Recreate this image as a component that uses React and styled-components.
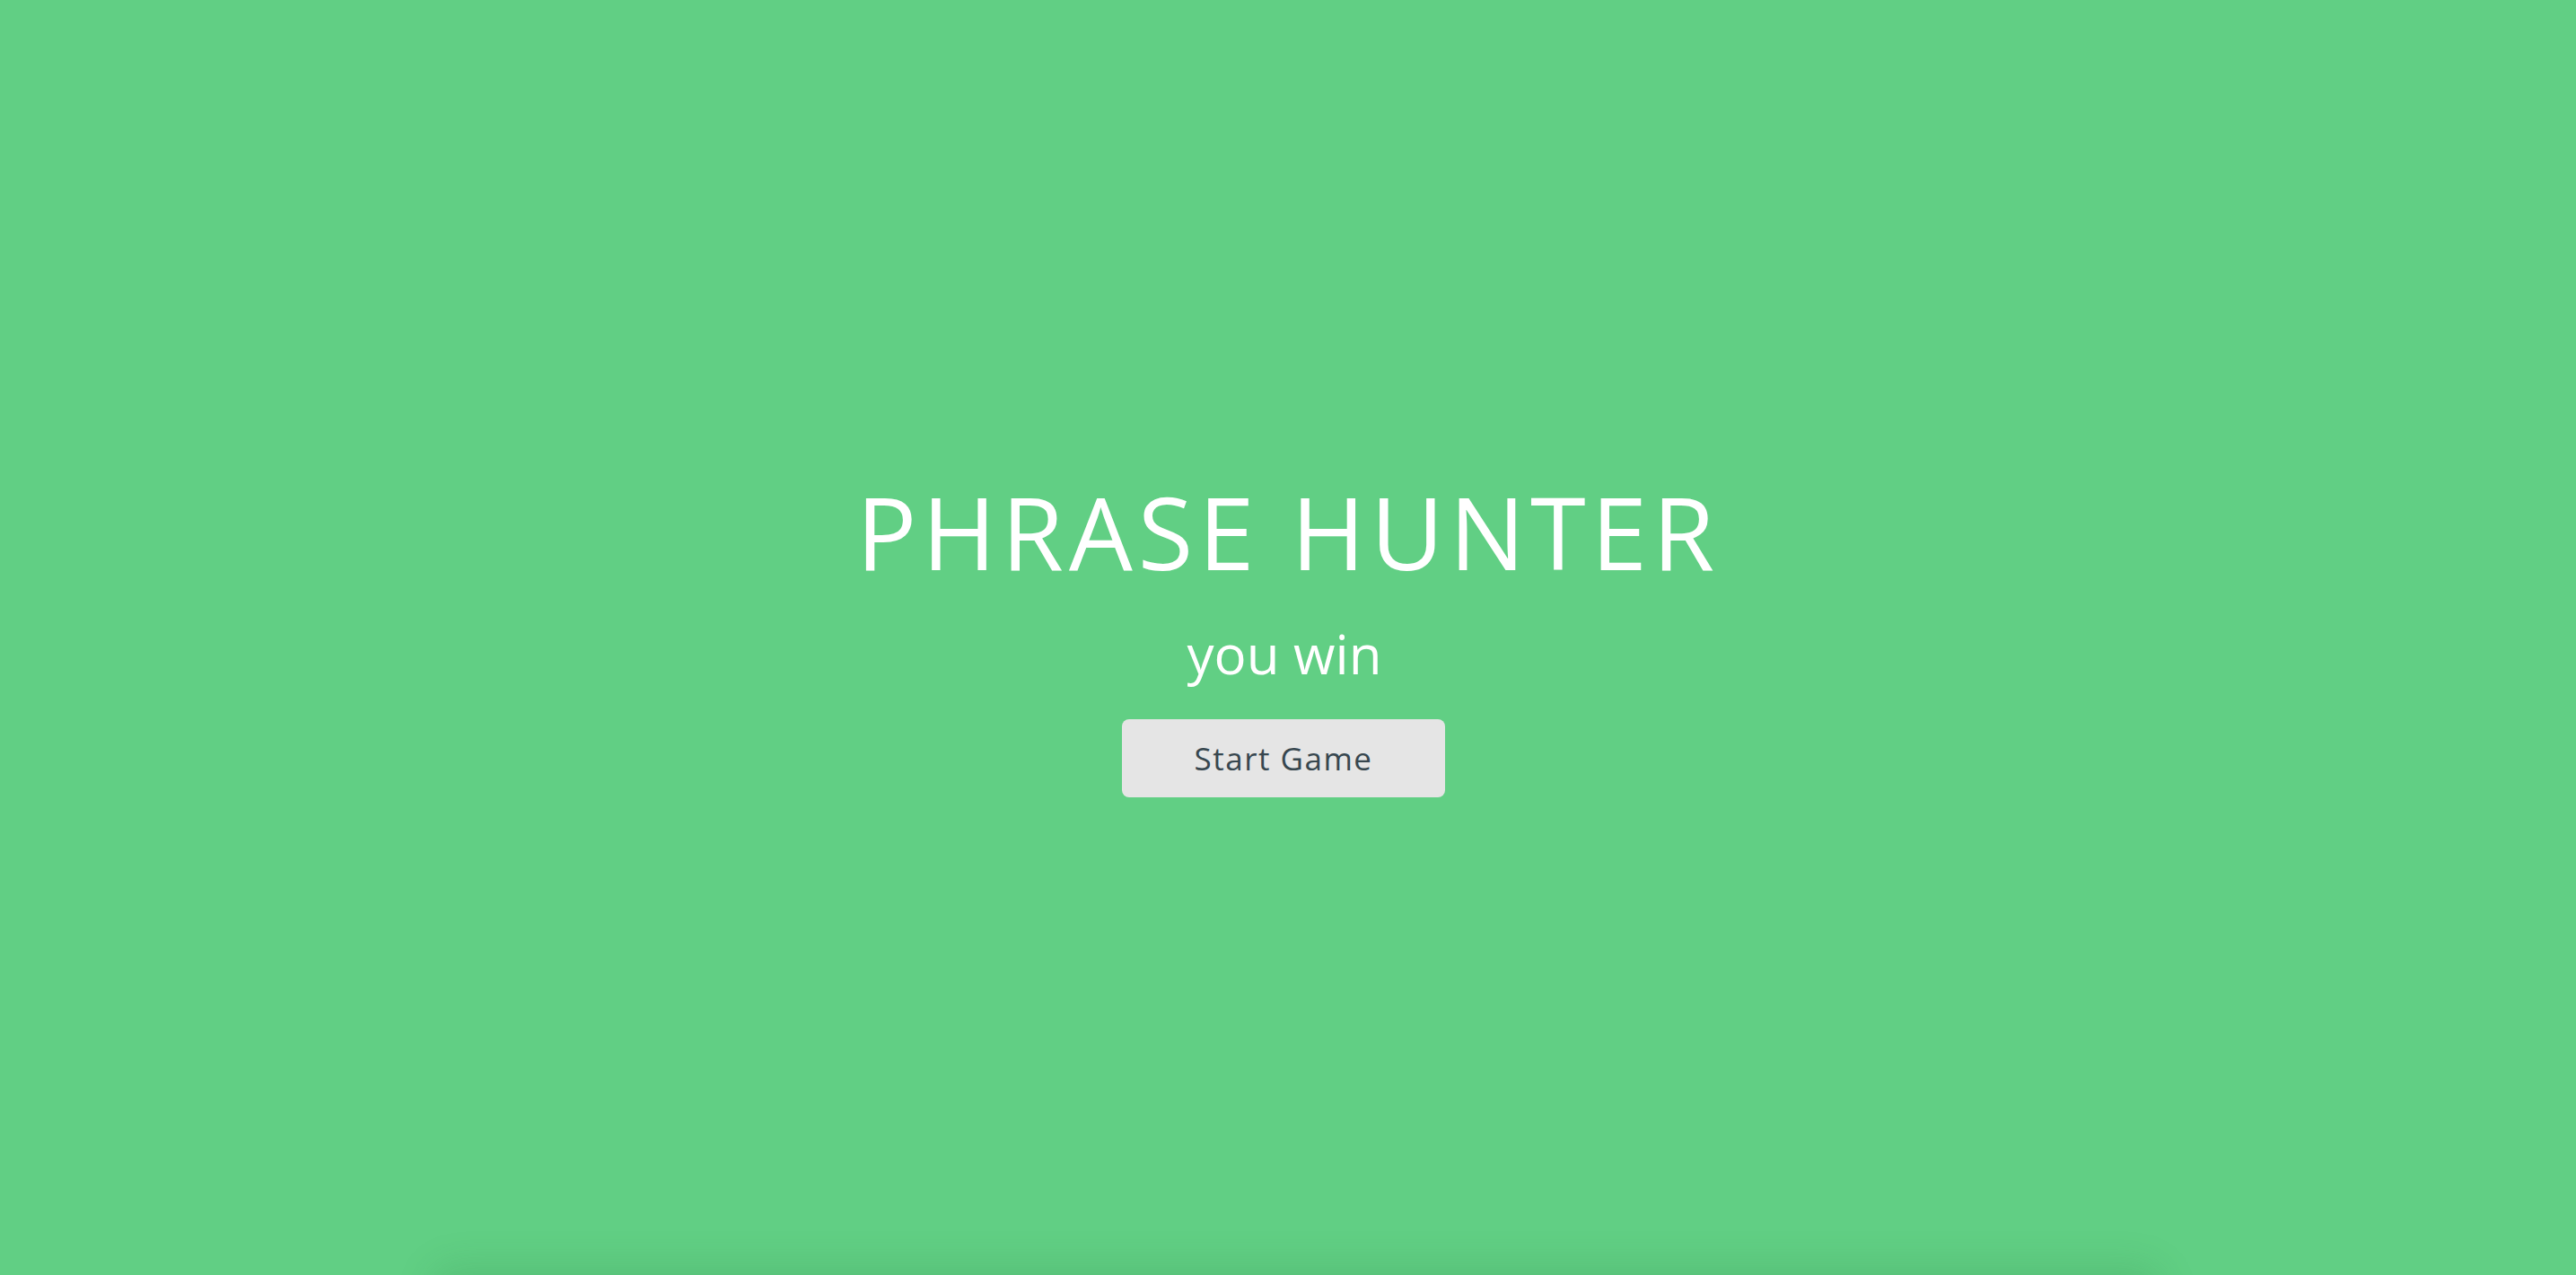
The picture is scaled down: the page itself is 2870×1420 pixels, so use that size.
import React from "react";
import styled, { createGlobalStyle } from "styled-components";

const Global = createGlobalStyle`
  html, body {
    margin: 0;
    padding: 0;
    height: 100%;
    overflow: hidden;
  }
  body {
    font-family: "Open Sans", "Liberation Sans", sans-serif;
    background: #61cf84;
  }
`;

const Overlay = styled.div`
  position: relative;
  height: 100vh;
  background: #61cf84;
  display: flex;
  flex-direction: column;
  align-items: center;
  padding-top: 525px;
  box-sizing: border-box;
  overflow: hidden;

  &::after {
    content: "";
    position: absolute;
    left: 480px;
    right: 460px;
    bottom: -60px;
    height: 60px;
    border-radius: 30px;
    box-shadow: 0 -10px 40px rgba(40, 120, 60, 0.18);
  }
`;

const Title = styled.h2`
  margin: 0;
  color: #fff;
  font-size: 112px;
  font-weight: 400;
  line-height: 1.2;
  letter-spacing: 6px;
`;

const Message = styled.h1`
  margin: 33px 8px 0 0;
  color: #fff;
  font-size: 60px;
  font-weight: 400;
  line-height: 1.2;
`;

const StartButton = styled.button`
  margin: 37px 10px 0 0;
  width: 360px;
  height: 87px;
  border: none;
  border-radius: 8px;
  background: #e5e5e5;
  color: #37474f;
  font-family: "Open Sans", "Liberation Sans", sans-serif;
  font-size: 35px;
  letter-spacing: 1.5px;
  cursor: pointer;
`;

export default function App() {
  return (
    <>
      <Global />
      <Overlay>
        <Title>PHRASE HUNTER</Title>
        <Message>you win</Message>
        <StartButton>Start Game</StartButton>
      </Overlay>
    </>
  );
}
